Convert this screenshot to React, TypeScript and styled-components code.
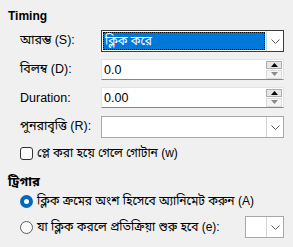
import styled, { createGlobalStyle } from 'styled-components';

const GlobalStyle = createGlobalStyle`
    html, body {
        margin: 0;
        padding: 0;
        background-color: #f0f0f0;
    }
    body {
        font-family: "Liberation Sans", "Noto Sans Bengali", "Noto Sans", sans-serif;
        font-size: 12px;
        color: #000;
    }
`;

const Chevron = () => (
    <svg width="9" height="5" viewBox="0 0 9 5">
        <polyline points="0.5,0.5 4.5,4.5 8.5,0.5" fill="none" stroke="#5a5a5a" strokeWidth="1" />
    </svg>
);

const Arrow = ({ up, color }: { up?: boolean; color: string }) => (
    <svg width="7" height="4" viewBox="0 0 7 4">
        <polygon points={up ? '0,4 3.5,0 7,4' : '0,0 3.5,4 7,0'} fill={color} />
    </svg>
);

const App = () => {
    return (
        <Page>
            <GlobalStyle />
            <Heading>Timing</Heading>

            <Row $top={6}>
                <Label>আরম্ভ (S):</Label>
                <Combo $focused $width={183} $height={22}>
                    <ComboText $selected>ক্লিক করে</ComboText>
                    <DropButton>
                        <Chevron />
                    </DropButton>
                </Combo>
            </Row>

            <Row $top={7}>
                <Label>বিলম্ব (D):</Label>
                <Edit>
                    <EditText>0.0</EditText>
                    <Spin>
                        <SpinUp>
                            <Arrow up color="#000" />
                        </SpinUp>
                        <SpinDown>
                            <Arrow color="#8a8a8a" />
                        </SpinDown>
                    </Spin>
                </Edit>
            </Row>

            <Row $top={7}>
                <Label>Duration:</Label>
                <Edit>
                    <EditText>0.00</EditText>
                    <Spin>
                        <SpinUp>
                            <Arrow up color="#000" />
                        </SpinUp>
                        <SpinDown>
                            <Arrow color="#8a8a8a" />
                        </SpinDown>
                    </Spin>
                </Edit>
            </Row>

            <Row $top={8}>
                <Label>পুনরাবৃত্তি (R):</Label>
                <Combo $width={183} $height={22}>
                    <ComboText />
                    <DropButton>
                        <Chevron />
                    </DropButton>
                </Combo>
            </Row>

            <OptionRow $top={8} $height={14}>
                <CheckBox />
                <OptionText>প্লে করা হয়ে গেলে গোটান (w)</OptionText>
            </OptionRow>

            <SubHeading>ট্রিগার</SubHeading>

            <OptionRow $top={3} $height={14}>
                <Radio $checked />
                <OptionText>ক্লিক ক্রমের অংশ হিসেবে অ্যানিমেট করুন (A)</OptionText>
            </OptionRow>

            <OptionRow $top={8} $height={22}>
                <Radio />
                <OptionText>যা ক্লিক করলে প্রতিক্রিয়া শুরু হবে (e):</OptionText>
                <Spacer />
                <Combo $width={39} $height={22}>
                    <ComboText />
                    <DropButton>
                        <Chevron />
                    </DropButton>
                </Combo>
            </OptionRow>
        </Page>
    );
};

export default App;

const Page = styled.div`
    width: 293px;
    height: 247px;
    box-sizing: border-box;
    padding: 8px 9px 0 8px;
    display: flex;
    flex-direction: column;
`;

const Heading = styled.div`
    font-weight: bold;
    height: 16px;
    line-height: 16px;
`;

const SubHeading = styled.div`
    font-weight: bold;
    margin-top: 13px;
    height: 18px;
    line-height: 18px;
    font-size: 13px;
`;

const Row = styled.div<{ $top: number }>`
    display: flex;
    align-items: center;
    margin-top: ${(p) => p.$top}px;
    padding-left: 12px;
`;

const Label = styled.div`
    width: 81px;
    flex-shrink: 0;
    white-space: nowrap;
    font-size: 12.5px;
`;

const Combo = styled.div<{ $focused?: boolean; $width: number; $height: number }>`
    width: ${(p) => p.$width}px;
    height: ${(p) => p.$height}px;
    box-sizing: border-box;
    flex-shrink: 0;
    display: flex;
    background-color: #fff;
    border: 1px solid ${(p) => (p.$focused ? '#3c3c3c' : '#a8a8a8')};
`;

const ComboText = styled.div<{ $selected?: boolean }>`
    flex: 1;
    margin: 1px;
    padding-left: 2px;
    line-height: 18px;
    white-space: nowrap;
    background-color: ${(p) => (p.$selected ? '#0078d7' : 'transparent')};
    color: ${(p) => (p.$selected ? '#fff' : '#000')};
    outline: ${(p) => (p.$selected ? '1px dotted #000' : 'none')};
    outline-offset: -1px;
`;

const DropButton = styled.div`
    width: 16px;
    flex-shrink: 0;
    border-left: 1px solid #d4d4d4;
    display: flex;
    align-items: center;
    justify-content: center;
`;

const Edit = styled.div`
    width: 183px;
    height: 21px;
    box-sizing: border-box;
    display: flex;
    align-items: center;
    background-color: #fff;
    border: 1px solid #e4e4e4;
    border-bottom-color: #868686;
`;

const EditText = styled.div`
    flex: 1;
    padding-left: 2px;
    font-size: 12.5px;
`;

const Spin = styled.div`
    width: 16px;
    height: 18px;
    margin-right: 1px;
    display: flex;
    flex-direction: column;
    gap: 1px;
`;

const SpinUp = styled.div`
    flex: 1;
    box-sizing: border-box;
    background-color: #e6e6e6;
    border: 1px solid #adadad;
    display: flex;
    align-items: center;
    justify-content: center;
`;

const SpinDown = styled.div`
    flex: 1;
    box-sizing: border-box;
    background-color: #f3f3f3;
    border: 1px solid #dcdcdc;
    display: flex;
    align-items: center;
    justify-content: center;
`;

const OptionRow = styled.div<{ $top: number; $height: number }>`
    display: flex;
    align-items: center;
    margin-top: ${(p) => p.$top}px;
    padding-left: 12px;
    height: ${(p) => p.$height}px;
`;

const CheckBox = styled.div`
    width: 13px;
    height: 13px;
    box-sizing: border-box;
    border: 1px solid #333;
    border-radius: 3px;
    background-color: #fff;
    flex-shrink: 0;
`;

const Radio = styled.div<{ $checked?: boolean }>`
    width: 13px;
    height: 13px;
    box-sizing: border-box;
    border-radius: 50%;
    flex-shrink: 0;
    background-color: ${(p) => (p.$checked ? '#fff' : '#fafafa')};
    border: ${(p) => (p.$checked ? '4px solid #0067c0' : '1px solid #5d5d5d')};
`;

const OptionText = styled.div`
    margin-left: 4px;
    white-space: nowrap;
    line-height: 14px;
`;

const Spacer = styled.div`
    flex: 1;
`;
